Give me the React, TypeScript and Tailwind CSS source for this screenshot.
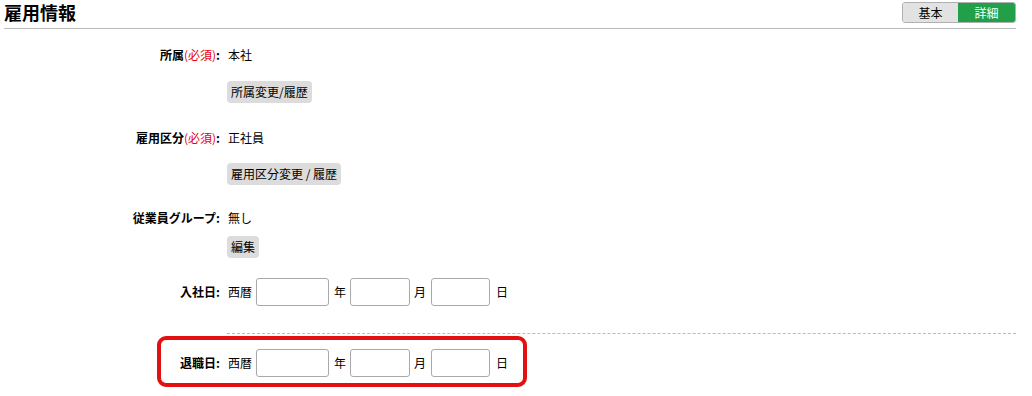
import React from 'react';

const font = { fontFamily: '"Noto Sans CJK JP", "Noto Sans", sans-serif' };

function Label({ text, required }: { text: string; required?: boolean }) {
  return (
    <div className="w-[216px] shrink-0 text-right font-bold text-[12px] leading-[20px] text-black">
      {text}
      {required && <span className="font-normal text-[#e60012]">(必須)</span>}
      <span>:</span>
    </div>
  );
}

function GrayButton({ children }: { children: React.ReactNode }) {
  return (
    <button className="block h-[22px] px-[4px] rounded-[4px] bg-[#dcdcdc] text-[12px] leading-[22px] text-black">
      {children}
    </button>
  );
}

function DateInputs() {
  return (
    <div className="flex items-center text-[12px] leading-[20px]">
      <span className="mr-[4px]">西暦</span>
      <input className="block w-[73px] h-[28px] border border-[#a9a9a9] rounded-[3px] bg-white" />
      <span className="ml-[5px] mr-[4px]">年</span>
      <input className="block w-[60px] h-[28px] border border-[#a9a9a9] rounded-[3px] bg-white" />
      <span className="ml-[4px] mr-[5px]">月</span>
      <input className="block w-[59px] h-[28px] border border-[#a9a9a9] rounded-[3px] bg-white" />
      <span className="ml-[6px]">日</span>
    </div>
  );
}

export default function App() {
  return (
    <div className="w-[1032px] h-[396px] bg-white pl-[4px] pr-[16px] overflow-hidden text-black" style={font}>
      {/* header */}
      <div className="flex items-center justify-between h-[29px] border-b border-[#bbbbbb] pb-[1px]">
        <h2 className="text-[18px] font-bold leading-[24px] -mt-[4px]">雇用情報</h2>
        <div className="flex h-[21px] -mt-[2px] rounded-[3px] border border-[#b0b0b0] overflow-hidden text-[12px] leading-[19px]">
          <button className="w-[55px] bg-[#e2e2e2] text-black">基本</button>
          <button className="w-[57px] bg-[#22a049] text-white">詳細</button>
        </div>
      </div>

      {/* 所属 */}
      <div className="flex items-center mt-[16px]">
        <Label text="所属" required />
        <span className="ml-[8px] text-[12px] leading-[20px]">本社</span>
      </div>
      <div className="flex ml-[223px] mt-[16px]">
        <GrayButton>所属変更/履歴</GrayButton>
      </div>

      {/* 雇用区分 */}
      <div className="flex items-center mt-[25px]">
        <Label text="雇用区分" required />
        <span className="ml-[8px] text-[12px] leading-[20px]">正社員</span>
      </div>
      <div className="flex ml-[223px] mt-[15px]">
        <GrayButton>雇用区分変更 / 履歴</GrayButton>
      </div>

      {/* 従業員グループ */}
      <div className="flex items-center mt-[23px]">
        <Label text="従業員グループ" />
        <span className="ml-[8px] text-[12px] leading-[20px]">無し</span>
      </div>
      <div className="flex ml-[223px] mt-[8px]">
        <GrayButton>編集</GrayButton>
      </div>

      {/* 入社日 */}
      <div className="flex items-center mt-[20px] h-[28px]">
        <Label text="入社日" />
        <div className="ml-[8px]">
          <DateInputs />
        </div>
      </div>

      <div className="ml-[223px] mt-[27px] border-t border-dashed border-[#bbbbbb]" />

      {/* 退職日 */}
      <div className="relative flex items-center mt-[15px] h-[28px]">
        <Label text="退職日" />
        <div className="ml-[8px]">
          <DateInputs />
        </div>
        <div className="absolute left-[153px] top-[-13px] w-[370px] h-[51px] border-[4px] border-[#e21010] rounded-[9px] pointer-events-none" />
      </div>
    </div>
  );
}
